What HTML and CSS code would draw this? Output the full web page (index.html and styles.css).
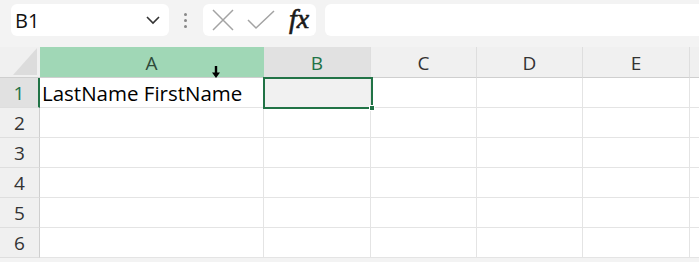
FILE: index.html
```html
<!DOCTYPE html>
<html>
<head>
<meta charset="utf-8">
<link rel="stylesheet" href="styles.css">
</head>
<body>
<div class="app">
  <div class="toolbar">
    <div class="namebox">
      <span class="ref">B1</span>
      <svg class="chev" width="16" height="10" viewBox="0 0 16 10"><path d="M2 2 L8 8 L14 2" fill="none" stroke="#333" stroke-width="1.6"/></svg>
    </div>
    <div class="dots"><i></i><i></i><i></i></div>
    <div class="fxbox">
      <svg width="24" height="22" viewBox="0 0 24 22"><path d="M2 1 L22 21 M22 1 L2 21" stroke="#a3a3a3" stroke-width="1.5" fill="none"/></svg>
      <svg width="28" height="20" viewBox="0 0 28 20"><path d="M1 10 L9 18 L27 1" stroke="#a3a3a3" stroke-width="1.5" fill="none"/></svg>
      <span class="fx">fx</span>
    </div>
    <div class="formula"></div>
  </div>
  <div class="sheet">
    <div class="grid">
      <div class="corner"><span class="tri"></span></div>
      <div class="ch sel-a">A</div>
      <div class="ch sel-b">B</div>
      <div class="ch">C</div>
      <div class="ch">D</div>
      <div class="ch">E</div>
      <div class="ch last"></div>

      <div class="rh active">1</div>
      <div class="c text">LastName FirstName</div>
      <div class="c b1"></div>
      <div class="c"></div><div class="c"></div><div class="c"></div><div class="c last"></div>

      <div class="rh">2</div>
      <div class="c"></div><div class="c"></div><div class="c"></div><div class="c"></div><div class="c"></div><div class="c last"></div>
      <div class="rh">3</div>
      <div class="c"></div><div class="c"></div><div class="c"></div><div class="c"></div><div class="c"></div><div class="c last"></div>
      <div class="rh">4</div>
      <div class="c"></div><div class="c"></div><div class="c"></div><div class="c"></div><div class="c"></div><div class="c last"></div>
      <div class="rh">5</div>
      <div class="c"></div><div class="c"></div><div class="c"></div><div class="c"></div><div class="c"></div><div class="c last"></div>
      <div class="rh">6</div>
      <div class="c"></div><div class="c"></div><div class="c"></div><div class="c"></div><div class="c"></div><div class="c last"></div>
    </div>
    <div class="selection"><span class="handle"></span></div>
    <svg class="cursor" width="8" height="12" viewBox="0 0 8 12"><path d="M2.8 0 H5.2 V6.5 H8 L4 12 L0 6.5 H2.8 Z" fill="#000"/></svg>
  </div>
</div>
</body>
</html>
```
FILE: styles.css
```css
* { box-sizing: border-box; }
html, body { margin: 0; padding: 0; }
body {
  width: 699px;
  height: 262px;
  overflow: hidden;
  background: #f3f3f3;
  font-family: "Open Sans", "Noto Sans", sans-serif;
}
.app { width: 699px; height: 262px; overflow: hidden; }
.toolbar {
  display: flex;
  align-items: center;
  height: 39px;
  padding-top: 1px;
}
.namebox {
  margin-left: 11px;
  width: 158px;
  height: 32px;
  background: #fff;
  border-radius: 6px;
  display: flex;
  align-items: center;
  justify-content: space-between;
  padding: 0 8px 0 4px;
}
.ref { font-size: 20px; color: #111; }
.dots {
  margin-left: 13px;
  width: 6px;
  display: flex;
  flex-direction: column;
  align-items: center;
  gap: 3px;
}
.dots i { display: block; width: 3px; height: 3px; border-radius: 50%; background: #888; }
.fxbox {
  margin-left: 15px;
  width: 113px;
  height: 32px;
  background: #fff;
  border-radius: 6px;
  display: flex;
  align-items: center;
  padding-left: 8px;
  gap: 12px;
}
.fx {
  font-family: "Liberation Serif", "DejaVu Serif", serif;
  font-style: italic;
  font-size: 28px;
  color: #1a1a1a;
  margin-left: 2px;
  line-height: 1;
  margin-top: -3px;
  -webkit-text-stroke: 0.6px #1a1a1a;
}
.formula {
  margin-left: 9px;
  flex: 1;
  height: 32px;
  background: #fff;
  border-radius: 6px 0 0 6px;
}
.sheet { position: relative; margin-top: 8px; }
.grid {
  display: grid;
  grid-template-columns: 40px 224px 107px 106px 106px 107px 1fr;
  grid-template-rows: 31px repeat(6, 30px);
  background: #fff;
}
.corner { background: #f0f0f0; position: relative; border-bottom: 1px solid #cfcfcf; }
.tri {
  position: absolute;
  right: 3px; bottom: 2px;
  width: 0; height: 0;
  border-left: 24px solid transparent;
  border-bottom: 27px solid #dcdcdc;
}
.ch {
  background: #f0f0f0;
  border-right: 1px solid #dedede;
  border-bottom: 1px solid #cfcfcf;
  display: flex;
  align-items: center;
  justify-content: center;
  font-size: 19px;
  color: #333;
  padding-top: 1px;
}
.ch.sel-a { background: #a0d7b6; color: #2f4a3a; border-right-color: #a0d7b6; }
.ch.sel-b { background: #e1e1e1; color: #217346; }
.ch.last, .c.last { border-right: none; }
.rh {
  background: #f0f0f0;
  border-bottom: 1px solid #dedede;
  border-right: 1px solid #cfcfcf;
  display: flex;
  align-items: center;
  justify-content: center;
  font-size: 19px;
  color: #333;
}
.rh.active { background: #e1e1e1; color: #217346; border-right: 2px solid #217346; }
.c {
  border-right: 1px solid #e4e4e4;
  border-bottom: 1px solid #e4e4e4;
}
.c.text {
  font-size: 20.5px;
  color: #000;
  padding-left: 2px;
  display: flex;
  align-items: center;
  white-space: nowrap;
  padding-top: 1px;
}
.c.b1 { background: #f1f1f1; }
.selection {
  position: absolute;
  left: 263px; top: 30px;
  width: 110px; height: 32px;
  border: 2px solid #217346;
}
.handle {
  position: absolute;
  right: -4px; bottom: -4px;
  width: 6px; height: 6px;
  background: #217346;
  border: 1px solid #fff;
}
.cursor { position: absolute; left: 212px; top: 19px; }
```
